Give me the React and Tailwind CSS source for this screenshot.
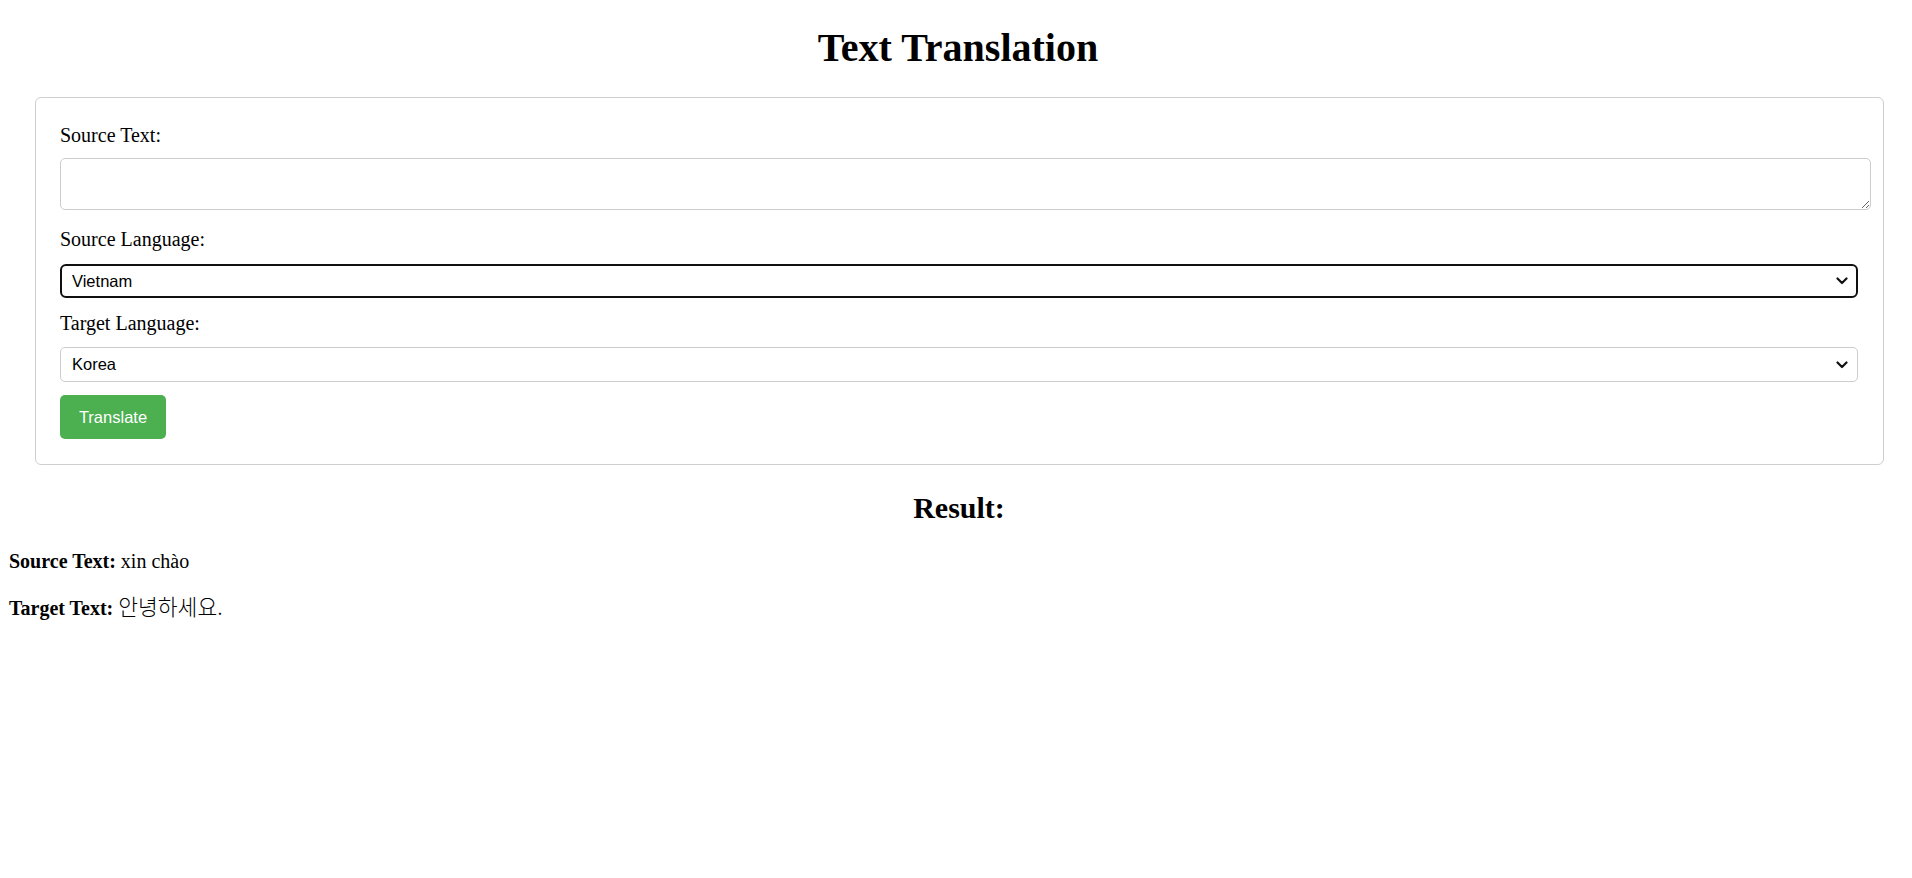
import React, { useState } from "react";

const languages = ["Vietnam", "Korea", "English", "Japan", "China"];

const Chevron = () => (
  <svg
    className="pointer-events-none absolute right-[10px] top-1/2 -translate-y-1/2"
    width="12"
    height="8"
    viewBox="0 0 12 8"
    fill="none"
  >
    <path d="M1.5 1.5 L6 6 L10.5 1.5" stroke="#111" strokeWidth="2.2" strokeLinecap="round" strokeLinejoin="round" />
  </svg>
);

const App = () => {
  const [text, setText] = useState("");
  const [source, setSource] = useState("Vietnam");
  const [target, setTarget] = useState("Korea");

  return (
    <div className="min-h-[878px] bg-white text-black font-['Liberation_Serif','Noto_Sans_CJK_KR',serif]">
      {/* Title */}
      <h1 className="pt-[26px] pl-[4px] text-center text-[40px] leading-[44px] font-bold">
        Text Translation
      </h1>

      {/* Form card */}
      <div className="mt-[27px] ml-[35px] mr-[28px] border border-[#cfcfcf] rounded-[6px] pt-[24px] pl-[24px] pr-[25px] pb-[25px] flex flex-col items-start">
        <label className="mt-[2px] mb-[12px] text-[20px] leading-[22px]">Source Text:</label>
        <textarea
          value={text}
          onChange={(e) => setText(e.target.value)}
          className="w-[calc(100%+13px)] h-[52px] border border-[#cccccc] rounded-[5px] px-[6px] py-[6px] text-[16px] outline-none"
        />

        <label className="mt-[18px] mb-[14px] text-[20px] leading-[22px]">Source Language:</label>
        <div className="relative w-full">
          <select
            value={source}
            onChange={(e) => setSource(e.target.value)}
            className="appearance-none w-full h-[34px] border-2 border-[#101010] rounded-[6px] pl-[10px] text-[16.5px] font-['Liberation_Sans',Arial,sans-serif] bg-white outline-none"
          >
            {languages.map((l) => (
              <option key={l} value={l}>{l}</option>
            ))}
          </select>
          <Chevron />
        </div>

        <label className="mt-[14px] mb-[13px] text-[20px] leading-[22px]">Target Language:</label>
        <div className="relative w-full">
          <select
            value={target}
            onChange={(e) => setTarget(e.target.value)}
            className="appearance-none w-full h-[35px] border border-[#cccccc] rounded-[5px] pl-[11px] text-[16.5px] font-['Liberation_Sans',Arial,sans-serif] bg-white outline-none"
          >
            {languages.map((l) => (
              <option key={l} value={l}>{l}</option>
            ))}
          </select>
          <Chevron />
        </div>

        <button className="mt-[13px] w-[106px] h-[44px] rounded-[5px] bg-[#4caf50] text-white text-[16.5px] font-['Liberation_Sans',Arial,sans-serif]">
          Translate
        </button>
      </div>

      {/* Result */}
      <h2 className="mt-[26px] pl-[6px] text-center text-[30px] leading-[33px] font-bold">Result:</h2>
      <div className="pl-[9px] text-[20px]">
        <p className="mt-[26px] leading-[22px]">
          <strong>Source Text:</strong> xin chào
        </p>
        <p className="mt-[18px]">
          <strong>Target Text:</strong>{" "}
          <span className="text-[21.5px] font-['Noto_Sans_CJK_KR',sans-serif] font-light">안녕하세요.</span>
        </p>
      </div>
    </div>
  );
};

export default App;
